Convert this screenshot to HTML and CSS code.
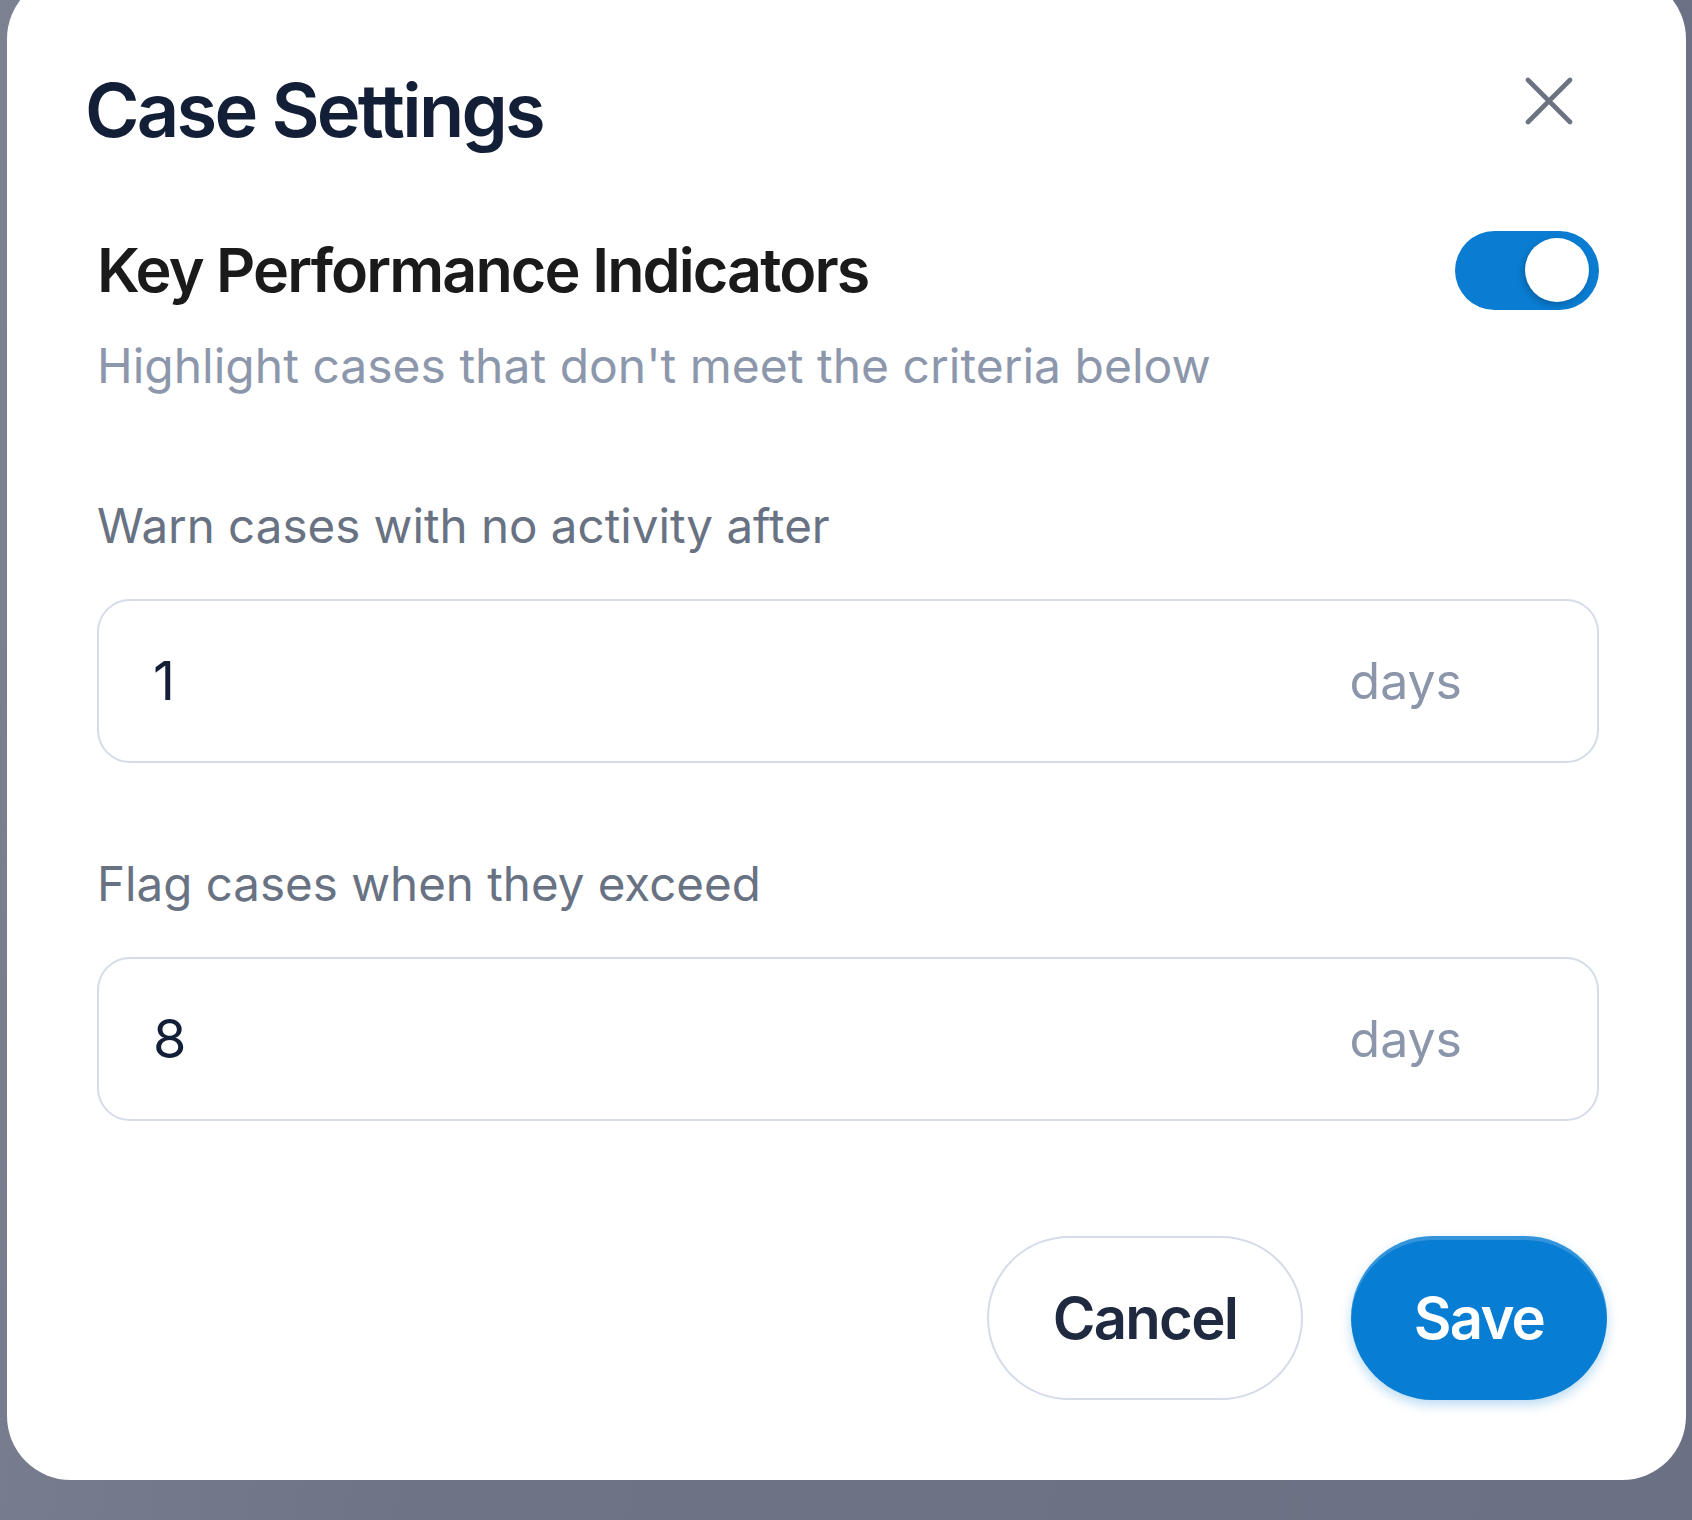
FILE: index.html
```html
<!DOCTYPE html>
<html lang="en">
<head>
<meta charset="utf-8">
<title>Case Settings</title>
<link rel="stylesheet" href="styles.css">
</head>
<body>
<div class="overlay">
  <div class="modal" role="dialog" aria-labelledby="case-settings-title">
    <header class="modal-header">
      <h1 class="title" id="case-settings-title">Case Settings</h1>
      <button class="close" type="button" aria-label="Close">
        <svg viewBox="0 0 48 48" width="48" height="48" aria-hidden="true">
          <path d="M3 3 L45 45 M45 3 L3 45" fill="none" stroke="#6b7280" stroke-width="4.6" stroke-linecap="round"/>
        </svg>
      </button>
    </header>
    <section class="modal-body">
      <div class="kpi-row">
        <h2 class="kpi-title">Key Performance Indicators</h2>
        <span class="toggle" role="switch" aria-checked="true"><span class="knob"></span></span>
      </div>
      <p class="subtitle">Highlight cases that don't meet the criteria below</p>

      <label class="field-label">Warn cases with no activity after</label>
      <div class="input-box">
        <span class="value">1</span>
        <span class="unit">days</span>
      </div>

      <label class="field-label second">Flag cases when they exceed</label>
      <div class="input-box">
        <span class="value">8</span>
        <span class="unit">days</span>
      </div>
    </section>
    <footer class="modal-footer">
      <button class="btn btn-cancel" type="button">Cancel</button>
      <button class="btn btn-save" type="button">Save</button>
    </footer>
  </div>
</div>
</body>
</html>
```

FILE: styles.css
```css
* { box-sizing: border-box; }

html, body {
  margin: 0;
  padding: 0;
}

body {
  font-family: Inter, "Noto Sans", "Liberation Sans", sans-serif;
}

.overlay {
  width: 1692px;
  height: 1520px;
  overflow: hidden;
  background: linear-gradient(100deg, #7c8292 0%, #6e7486 35%, #6b7184 100%);
}

.modal {
  margin-top: -25px;
  margin-left: 7px;
  width: 1679px;
  background: #ffffff;
  border-radius: 64px;
  padding: 95px 0 80px 0;
}

.modal-header {
  display: flex;
  align-items: flex-start;
  justify-content: space-between;
  padding: 0 113px 0 78px;
}

.title {
  margin: 0;
  font-size: 74px;
  line-height: 80px;
  font-weight: 600;
  letter-spacing: -0.037em;
  color: #131f37;
}

.close {
  margin-top: 7px;
  padding: 0;
  border: 0;
  background: none;
  width: 48px;
  height: 48px;
  display: block;
}
.close svg { display: block; }

.modal-body {
  padding: 0 87px 0 90px;
  display: flex;
  flex-direction: column;
}

.kpi-row {
  margin-top: 80px;
  height: 80px;
  display: flex;
  align-items: center;
  justify-content: space-between;
}

.kpi-title {
  margin: 0;
  font-size: 61px;
  line-height: 70px;
  font-weight: 600;
  letter-spacing: -0.031em;
  color: #1a1a1a;
}

.toggle {
  position: relative;
  width: 144px;
  height: 79px;
  border-radius: 40px;
  background: #0a7dd3;
  display: block;
}

.knob {
  position: absolute;
  top: 7px;
  right: 10px;
  width: 64px;
  height: 64px;
  border-radius: 50%;
  background: #ffffff;
  box-shadow: -2px 3px 7px rgba(0, 0, 0, 0.22);
}

.subtitle {
  margin: 28px 0 0 0;
  font-size: 48px;
  line-height: 56px;
  font-weight: 400;
  color: #8d97ac;
}

.field-label {
  display: block;
  margin-top: 104px;
  font-size: 47.5px;
  line-height: 56px;
  font-weight: 400;
  color: #687283;
}
.field-label.second { margin-top: 93px; }

.input-box {
  margin-top: 45px;
  height: 164px;
  border: 2.5px solid #d5dce8;
  border-radius: 33px;
  display: flex;
  align-items: center;
  justify-content: space-between;
  padding: 0 135px 0 54px;
}

.value {
  font-size: 54px;
  line-height: 64px;
  color: #131f37;
}

.unit {
  font-size: 50px;
  line-height: 64px;
  color: #8c96ab;
}

.modal-footer {
  margin-top: 115px;
  display: flex;
  justify-content: flex-end;
  gap: 48px;
  padding-right: 79px;
}

.btn {
  height: 164px;
  border-radius: 82px;
  font-family: Inter, "Noto Sans", "Liberation Sans", sans-serif;
  font-size: 58px;
  font-weight: 600;
  letter-spacing: -0.03em;
  line-height: 1;
  cursor: pointer;
}

.btn-cancel {
  width: 316px;
  background: #ffffff;
  border: 2.5px solid #d5dce8;
  color: #1f2a40;
}

.btn-save {
  width: 256px;
  background: #077dd3;
  border: 0;
  color: #ffffff;
  box-shadow: inset 0 4px 0 rgba(255, 255, 255, 0.18), 0 5px 12px rgba(7, 125, 211, 0.28);
}
```
